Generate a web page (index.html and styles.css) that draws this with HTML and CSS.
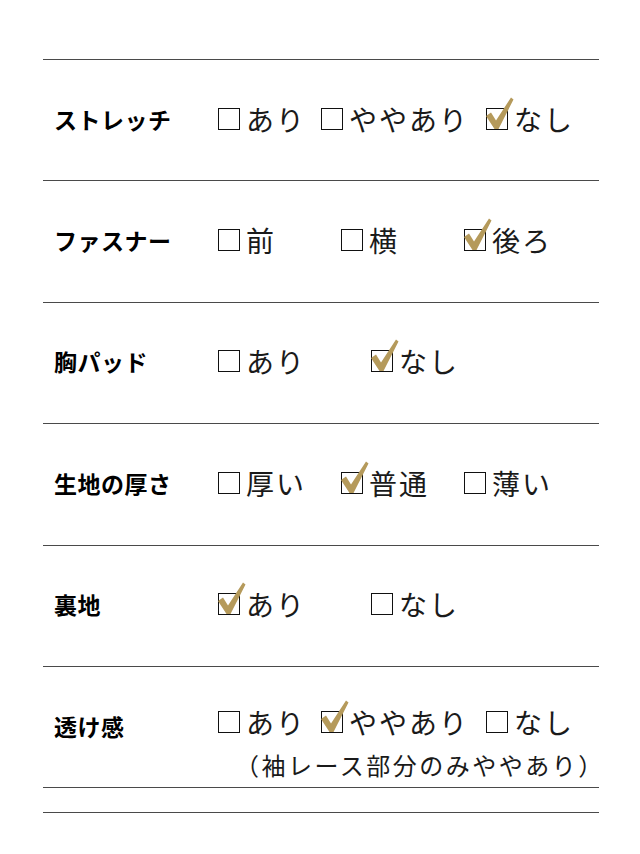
FILE: index.html
```html
<!DOCTYPE html>
<html lang="ja">
<head>
<meta charset="utf-8">
<link rel="stylesheet" href="styles.css">
</head>
<body>
<div class="sheet">
  <div class="row">
    <div class="label">ストレッチ</div>
    <div class="opts cols-a">
      <span class="opt"><span class="box"></span>あり</span>
      <span class="opt"><span class="box"></span>ややあり</span>
      <span class="opt"><span class="box on"><svg class="check" viewBox="0 -12 32 34"><polygon points="0,8 5,4.5 10,12.5 25,-10.5 27.5,-8.5 12.5,21 8.5,21"/></svg></span>なし</span>
    </div>
  </div>
  <div class="row">
    <div class="label">ファスナー</div>
    <div class="opts cols-b">
      <span class="opt"><span class="box"></span>前</span>
      <span class="opt"><span class="box"></span>横</span>
      <span class="opt"><span class="box on"><svg class="check" viewBox="0 -12 32 34"><polygon points="0,8 5,4.5 10,12.5 25,-10.5 27.5,-8.5 12.5,21 8.5,21"/></svg></span>後ろ</span>
    </div>
  </div>
  <div class="row">
    <div class="label">胸パッド</div>
    <div class="opts cols-c">
      <span class="opt"><span class="box"></span>あり</span>
      <span class="opt"><span class="box on"><svg class="check" viewBox="0 -12 32 34"><polygon points="0,8 5,4.5 10,12.5 25,-10.5 27.5,-8.5 12.5,21 8.5,21"/></svg></span>なし</span>
    </div>
  </div>
  <div class="row">
    <div class="label">生地の厚さ</div>
    <div class="opts cols-b">
      <span class="opt"><span class="box"></span>厚い</span>
      <span class="opt"><span class="box on"><svg class="check" viewBox="0 -12 32 34"><polygon points="0,8 5,4.5 10,12.5 25,-10.5 27.5,-8.5 12.5,21 8.5,21"/></svg></span>普通</span>
      <span class="opt"><span class="box"></span>薄い</span>
    </div>
  </div>
  <div class="row">
    <div class="label">裏地</div>
    <div class="opts cols-c">
      <span class="opt"><span class="box on"><svg class="check" viewBox="0 -12 32 34"><polygon points="0,8 5,4.5 10,12.5 25,-10.5 27.5,-8.5 12.5,21 8.5,21"/></svg></span>あり</span>
      <span class="opt"><span class="box"></span>なし</span>
    </div>
  </div>
  <div class="row">
    <div class="label">透け感</div>
    <div class="stack">
      <div class="opts cols-a">
        <span class="opt"><span class="box"></span>あり</span>
        <span class="opt"><span class="box on"><svg class="check" viewBox="0 -12 32 34"><polygon points="0,8 5,4.5 10,12.5 25,-10.5 27.5,-8.5 12.5,21 8.5,21"/></svg></span>ややあり</span>
        <span class="opt"><span class="box"></span>なし</span>
      </div>
      <div class="note">（袖レース部分のみややあり）</div>
    </div>
  </div>
  <div class="row spacer"></div>
</div>
</body>
</html>
```
FILE: styles.css
```css
html, body {
  margin: 0;
  padding: 0;
  background: #fff;
}
body {
  font-family: "Noto Sans CJK JP", "Noto Sans", sans-serif;
  color: #111;
}
.sheet {
  margin: 59px 0 0 43px;
  width: 556px;
  border-bottom: 1px solid #4a4a4a;
}
.row {
  display: grid;
  grid-template-columns: 164px 1fr;
  align-items: center;
  height: 121.4px;
  box-sizing: border-box;
  padding: 0 0 3px 11px;
  border-top: 1px solid #4a4a4a;
}
.row.spacer {
  height: 25px;
  padding: 0;
}
.label {
  font-size: 23px;
  font-weight: 700;
  letter-spacing: 0.5px;
  line-height: 30px;
  color: #000;
}
.opts {
  display: grid;
  align-items: center;
  height: 40px;
}
.cols-a { grid-template-columns: 103px 165px auto; }
.cols-b { grid-template-columns: 123px 123px auto; }
.cols-c { grid-template-columns: 153px auto; }
.opt {
  display: inline-flex;
  align-items: center;
  font-size: 28px;
  letter-spacing: 2px;
  line-height: 40px;
  white-space: nowrap;
  color: #1a1a1a;
}
.box {
  position: relative;
  width: 22px;
  height: 22px;
  box-sizing: border-box;
  border: 1px solid #111;
  margin-right: 6px;
  flex: none;
}
.check {
  position: absolute;
  left: -1px;
  top: -13px;
  width: 32px;
  height: 34px;
  fill: #b59a5b;
}
.stack {
  align-self: start;
  padding-top: 35px;
  display: flex;
  flex-direction: column;
}
.note {
  margin-top: 4px;
  margin-left: 17px;
  font-size: 24px;
  letter-spacing: 2.5px;
  line-height: 38px;
  white-space: nowrap;
  color: #1a1a1a;
}
```
